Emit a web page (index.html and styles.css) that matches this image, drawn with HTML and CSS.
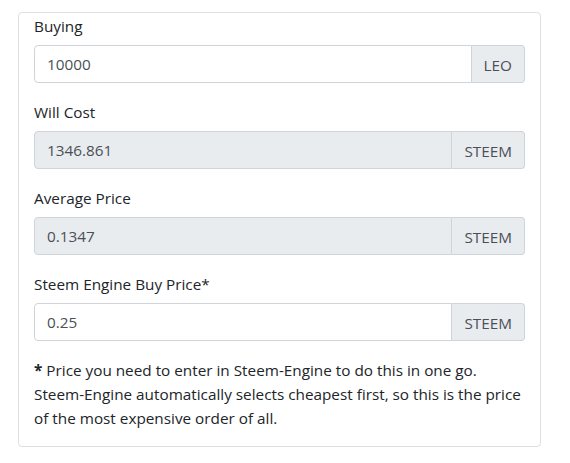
FILE: index.html
```html
<!DOCTYPE html>
<html>
<head>
<meta charset="utf-8">
<link rel="stylesheet" href="styles.css">
</head>
<body>
<div class="card">
  <div class="form-group">
    <label class="label">Buying</label>
    <div class="input-group">
      <input class="form-control" type="text" value="10000">
      <span class="addon">LEO</span>
    </div>
  </div>
  <div class="form-group">
    <label class="label">Will Cost</label>
    <div class="input-group">
      <input class="form-control readonly" type="text" value="1346.861" readonly>
      <span class="addon">STEEM</span>
    </div>
  </div>
  <div class="form-group">
    <label class="label">Average Price</label>
    <div class="input-group">
      <input class="form-control readonly" type="text" value="0.1347" readonly>
      <span class="addon">STEEM</span>
    </div>
  </div>
  <div class="form-group">
    <label class="label">Steem Engine Buy Price*</label>
    <div class="input-group">
      <input class="form-control" type="text" value="0.25">
      <span class="addon">STEEM</span>
    </div>
  </div>
  <p class="note"><b>*</b> Price you need to enter in Steem-Engine to do this in one go. Steem-Engine automatically selects cheapest first, so this is the price of the most expensive order of all.</p>
</div>
</body>
</html>
```
FILE: styles.css
```css
* { box-sizing: border-box; }
body {
  margin: 0;
  padding: 12px 0 0 18px;
  font-family: "Open Sans", "Noto Sans", sans-serif;
  font-size: 15.3px;
  line-height: 24px;
  color: #212529;
  background: #fff;
}
.card {
  width: 523px;
  border: 1px solid rgba(0,0,0,.125);
  border-radius: 4px;
  padding: 0 15px;
}
.form-group { margin-bottom: 16px; }
.label { display: block; margin-bottom: 8px; padding-top: 1px; height: 24px; }
.input-group { display: flex; height: 38px; }
.form-control {
  flex: 1 1 auto;
  min-width: 0;
  height: 38px;
  padding: 6px 12px;
  font: inherit;
  color: #495057;
  background: #fff;
  border: 1px solid #ced4da;
  border-radius: 4px 0 0 4px;
  outline: none;
}
.form-control.readonly { background: #e9ecef; }
.addon {
  display: flex;
  align-items: center;
  padding: 1px 12px 0;
  color: #495057;
  background: #e9ecef;
  border: 1px solid #ced4da;
  border-left: 0;
  border-radius: 0 4px 4px 0;
}
.note { margin: 0 0 16px; padding-top: 1px; }
.note b { font-weight: 700; }
```
